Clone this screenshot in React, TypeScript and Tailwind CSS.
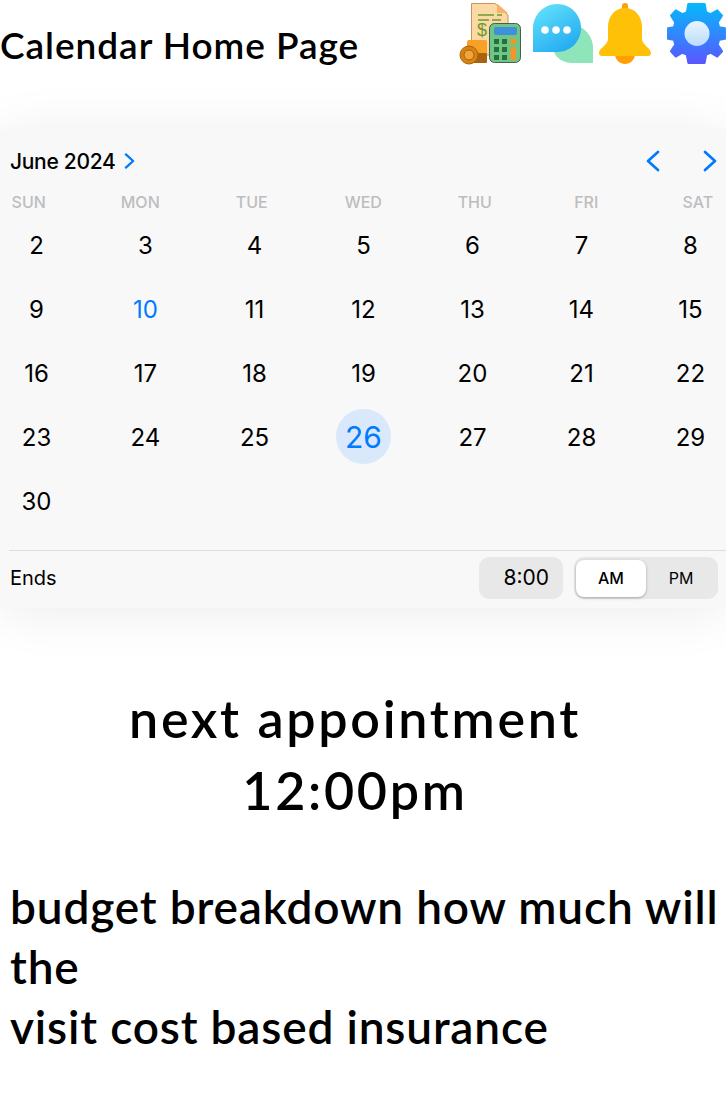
import React from "react";

const weekdays = ["SUN", "MON", "TUE", "WED", "THU", "FRI", "SAT"];
const days = Array.from({ length: 29 }, (_, i) => i + 2);

const Chevron = ({ left, small }: { left?: boolean; small?: boolean }) => (
   <svg
      width={small ? 11 : 14}
      height={small ? 16 : 22}
      viewBox="0 0 14 22"
      fill="none"
      stroke="#007aff"
      strokeWidth={small ? 3.2 : 2.7}
      strokeLinecap="round"
      strokeLinejoin="round"
   >
      <path d={left ? "M12 2L2 11L12 20" : "M2 2L12 11L2 20"} />
   </svg>
);

const BudgetIcon = () => (
   <svg width="62" height="62" viewBox="0 0 62 62">
      <path d="M12.5 0.5H36L49 12V52H12.5Z" fill="#fbd9a4" stroke="#c9925c" strokeWidth="1" />
      <path d="M38 0.5V10H49Z" fill="#f6b26b" />
      <path d="M19 12H35M38 12H43M19 17H30M33 17H42" stroke="#6b9a2e" strokeWidth="1.6" />
      <text x="18" y="33" fontSize="18" fill="#6b9a2e" fontFamily="Liberation Sans, sans-serif">$</text>
      <rect x="30.5" y="20.5" width="31" height="39" rx="5" fill="#6fc583" stroke="#4a5d4e" strokeWidth="1" />
      <rect x="35" y="24" width="23" height="8" rx="2" fill="#3f8fdc" />
      <rect x="35" y="36" width="5" height="5" fill="#24713f" />
      <rect x="43" y="36" width="5" height="5" fill="#24713f" />
      <rect x="51.5" y="36" width="5.5" height="5" fill="#f2962a" />
      <rect x="35" y="44" width="5" height="5" fill="#24713f" />
      <rect x="43" y="44" width="5" height="5" fill="#24713f" />
      <rect x="51.5" y="44" width="5.5" height="13" fill="#f2962a" />
      <rect x="35" y="52" width="5" height="5" fill="#24713f" />
      <rect x="43" y="52" width="5" height="5" fill="#24713f" />
      <rect x="8" y="37" width="20" height="15" rx="2" fill="#f7a226" />
      <rect x="12" y="50" width="16" height="10" rx="1" fill="#a9620f" />
      <circle cx="10" cy="52" r="9" fill="#d9830f" stroke="#a9620f" strokeWidth="1" />
      <circle cx="10" cy="52" r="5" fill="#f0a43c" stroke="#a9620f" strokeWidth="1" />
   </svg>
);

const ChatIcon = () => (
   <svg width="62" height="60" viewBox="0 0 62 60">
      <defs>
         <linearGradient id="chatBlue" x1="0.2" y1="0" x2="0.8" y2="1">
            <stop offset="0" stopColor="#62e0fb" />
            <stop offset="1" stopColor="#1fa8f0" />
         </linearGradient>
      </defs>
      <path d="M40 20C52 22 61 32 61 44V59H40C32 59 25 55 22 48Z" fill="#8fe5ba" />
      <path d="M25 0C39 0 49 11 49 24C49 37 39 48 25 48H1V24C1 11 12 0 25 0Z" fill="url(#chatBlue)" />
      <circle cx="13" cy="26" r="3.8" fill="#fff" />
      <circle cx="24" cy="26" r="3.8" fill="#fff" />
      <circle cx="35" cy="26" r="3.8" fill="#fff" />
   </svg>
);

const BellIcon = () => (
   <svg width="52" height="61" viewBox="0 0 52 61">
      <path d="M16 50H36V51C36 57 31 61 26 61C21 61 16 57 16 51Z" fill="#ff9f00" />
      <rect x="23" y="0" width="6" height="10" rx="3" fill="#ff9f00" />
      <path d="M26 5C36 5 43 13 43 24V36C43 42 52 45 52 50C52 52 51 53 49 53H3C1 53 0 52 0 50C0 45 9 42 9 36V24C9 13 16 5 26 5Z" fill="#ffc107" />
   </svg>
);

const GearIcon = () => (
   <svg width="59" height="61" viewBox="0 0 59 61">
      <defs>
         <linearGradient id="gearBlue" gradientUnits="userSpaceOnUse" x1="0" y1="0" x2="0" y2="61">
            <stop offset="0" stopColor="#05b8fb" />
            <stop offset="1" stopColor="#5a58ff" />
         </linearGradient>
         <linearGradient id="gearCore" x1="0" y1="0" x2="0" y2="1">
            <stop offset="0" stopColor="#e8f5ff" />
            <stop offset="1" stopColor="#bcdcfb" />
         </linearGradient>
      </defs>
      <path
         transform="translate(1 1) scale(0.966)"
         d="M21 0H38L39.5 8.5L44 10.5L51 6.5L56 12L51.5 19L53 24L59 25V36L53 37L51.5 42L56 49L51 54.5L44 50.5L39.5 52.5L38 61H21L19.5 52.5L15 50.5L8 54.5L3 49L7.5 42L6 37L0 36V25L6 24L7.5 19L3 12L8 6.5L15 10.5L19.5 8.5Z"
         fill="url(#gearBlue)"
         stroke="url(#gearBlue)"
         strokeWidth="2"
         strokeLinejoin="round"
      />
      <circle cx="30" cy="30.5" r="12.5" fill="url(#gearCore)" />
   </svg>
);

function Day({ n }: { n: number }) {
   if (n === 26) {
      return (
         <span className="flex items-center justify-center">
            <span className="mb-[4px] pt-[2px] w-[55px] h-[55px] rounded-full bg-[#d9e8fa] text-[#007aff] text-[30px] flex items-center justify-center">
               {n}
            </span>
         </span>
      );
   }
   return (
      <span className={`flex items-center justify-center text-[24px] ${n === 10 ? "text-[#007aff]" : ""}`}>
         {n}
      </span>
   );
}

export default function App() {
   return (
      <div className="w-[726px] h-[1115px] bg-white overflow-hidden font-['Inter',sans-serif] text-black">
         {/* Header */}
         <header className="h-[129px] flex items-start justify-between">
            <h1 className="mt-[23px] text-[37px] leading-[44px] font-['Lato',sans-serif] font-semibold tracking-[0.95px] whitespace-nowrap">
               Calendar Home Page
            </h1>
            <div className="flex items-start mt-[3px]">
               <div className="mr-[11px]"><BudgetIcon /></div>
               <div className="mt-[1px] mr-[5px]"><ChatIcon /></div>
               <div className="mr-[16px]"><BellIcon /></div>
               <GearIcon />
            </div>
         </header>

         {/* Calendar card */}
         <section className="h-[479px] bg-[#f8f8f8] shadow-[0_4px_50px_rgba(0,0,0,0.08)] flex flex-col">
            <div className="h-[64px] shrink-0 flex items-center justify-between pl-[10px] pr-[9px]">
               <div className="flex items-center gap-[9px]">
                  <span className="text-[21px] leading-none font-medium tracking-[-0.3px]">June 2024</span>
                  <Chevron small />
               </div>
               <div className="flex items-center gap-[43px]">
                  <Chevron left />
                  <Chevron />
               </div>
            </div>

            <div className="grid grid-cols-[repeat(7,111.5px)] h-[18px] shrink-0 -ml-[27px] items-center">
               {weekdays.map((d) => (
                  <span key={d} className="text-center text-[16px] leading-none font-medium text-[#bdbdbf]">
                     {d}
                  </span>
               ))}
            </div>

            <div className="grid grid-cols-[repeat(7,109px)] auto-rows-[64px] mt-[3px] -ml-[18px] h-[320px] shrink-0">
               {days.map((n) => (
                  <Day key={n} n={n} />
               ))}
            </div>

            {/* Ends row */}
            <div className="ml-[9px] mt-[16px] border-t border-[#dedede] flex items-center justify-between pt-[6px] pr-[8px]">
               <span className="text-[20px] ml-[1px]">Ends</span>
               <div className="flex items-center gap-[11px]">
                  <div className="w-[84px] h-[42px] rounded-[10px] bg-[#e8e8e8] flex items-center justify-end pr-[14px] text-[21px]">
                     8:00
                  </div>
                  <div className="w-[144px] h-[42px] rounded-[10px] bg-[#e8e8e8] flex items-center p-[2px]">
                     <div className="w-[70px] h-[37px] rounded-[8px] bg-white shadow-[0_1px_3px_rgba(0,0,0,0.3)] flex items-center justify-center text-[16px] font-medium">
                        AM
                     </div>
                     <div className="flex-1 flex items-center justify-center text-[16px]">PM</div>
                  </div>
               </div>
            </div>
         </section>

         {/* Next appointment */}
         <div className="mt-[74px] pr-[16px] text-center text-[52px] leading-[72px] font-['Lato',sans-serif] font-semibold tracking-[2.7px]">
            <p>next appointment</p>
            <p>12:00pm</p>
         </div>

         {/* Budget note */}
         <p className="mt-[51px] ml-[10px] text-[46px] leading-[60px] font-['Lato',sans-serif] font-semibold tracking-[0.83px] whitespace-nowrap">
            budget breakdown how much will
            <br />
            the
            <br />
            visit cost based insurance
         </p>
      </div>
   );
}
